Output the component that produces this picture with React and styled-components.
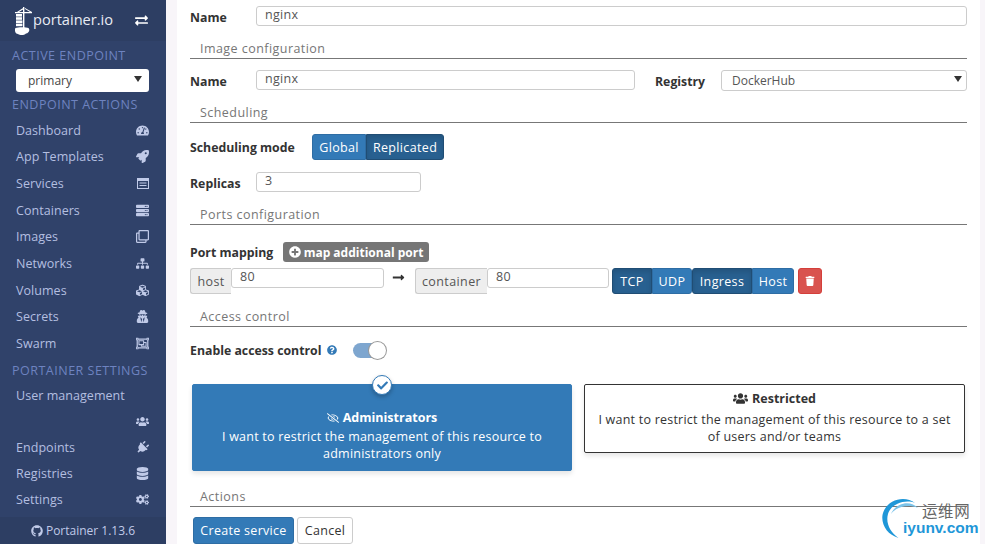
import React from 'react';
import styled, { createGlobalStyle } from 'styled-components';
import {
  FaTachometerAlt, FaRocket, FaServer, FaRegClone, FaSitemap, FaCubes, FaUserSecret,
  FaRegObjectGroup, FaUsers, FaPlug, FaDatabase, FaCogs, FaGithub, FaExchangeAlt, FaPlusCircle,
  FaLongArrowAltRight, FaQuestionCircle, FaTrash, FaRegEyeSlash, FaCheck,
} from 'react-icons/fa';

const Global = createGlobalStyle`
  html, body { margin: 0; height: 544px; overflow: hidden; background: #f8f5f9; }
  body { font-family: "Open Sans", "Noto Sans", sans-serif; font-size: 13px; color: #333; }
  * { box-sizing: border-box; }
`;

const Page = styled.div`
  display: flex;
  width: 985px;
  height: 544px;
  overflow: hidden;
  position: relative;
`;

const Sidebar = styled.aside`
  width: 166px;
  flex: none;
  height: 544px;
  background: #30426a;
  display: flex;
  flex-direction: column;
  color: #b4bfe0;
`;

const Brand = styled.div`
  height: 41px;
  background: #2d3e63;
  display: flex;
  align-items: center;
  padding: 0 0 0 15px;
  color: #fff;
`;

const BrandName = styled.span`
  font-size: 14.6px;
  margin-left: 1px;
  color: #e8ebf3;
  width: 80px;
  line-height: 20px;
  margin-top: -4px;
  white-space: nowrap;
`;

const Swap = styled(FaExchangeAlt)`
  font-size: 13px;
  margin-left: 22px;
  color: #fff;
`;

const SideTitle = styled.div`
  color: #6e83c0;
  font-size: 12.5px;
  letter-spacing: 0.5px;
  padding-left: 12px;
  height: 20px;
  line-height: 20px;
  white-space: nowrap;
  margin-top: ${(p) => p.$top || 0}px;
  margin-bottom: ${(p) => p.$bottom || 0}px;
`;

const EndpointSelect = styled.div`
  width: 133px;
  height: 23px;
  margin: 3px 0 3px 16px;
  background: #fff;
  border-radius: 3px;
  color: #444;
  font-size: 12px;
  display: flex;
  align-items: center;
  justify-content: space-between;
  padding: 0 7px 0 12px;
`;

const Caret = styled.span`
  width: 0;
  height: 0;
  border-left: 4px solid transparent;
  border-right: 4px solid transparent;
  border-top: 6px solid #333;
  margin-top: -3px;
`;

const NavList = styled.nav`
  display: flex;
  flex-direction: column;
`;

const NavRow = styled.div`
  height: ${(p) => p.$h || 26.67}px;
  display: flex;
  align-items: center;
  justify-content: ${(p) => (p.$iconOnly ? 'flex-end' : 'space-between')};
  padding: 0 17px 0 16px;
  font-size: 12.5px;
  letter-spacing: 0.05px;
  color: #b4bfe0;
  white-space: nowrap;
  & svg { font-size: 13px; color: #c0cae8; }
`;

const TiltedPlug = styled(FaPlug)`
  transform: rotate(45deg);
`;

const Footer = styled.div`
  margin-top: auto;
  height: 27px;
  background: #2d3e63;
  display: flex;
  align-items: center;
  justify-content: center;
  gap: 3px;
  font-size: 12px;
  color: #c0cae8;
`;

const Main = styled.main`
  width: 803px;
  margin-left: 11px;
  height: 544px;
  background: #fff;
  padding: 0 13px;
  flex: none;
`;

const Row = styled.div`
  display: flex;
  align-items: ${(p) => p.$align || 'center'};
  height: ${(p) => p.$h}px;
  margin-top: ${(p) => p.$top || 0}px;
`;

const Label = styled.label`
  font-weight: 700;
  font-size: 12.3px;
  color: #333;
  width: ${(p) => p.$w || 66}px;
  margin-left: ${(p) => p.$left || 0}px;
  padding-top: ${(p) => (p.$low ? 3 : 0)}px;
  flex: none;
  white-space: nowrap;
`;

const Input = styled.input`
  height: 20px;
  width: ${(p) => p.$w}px;
  flex: ${(p) => (p.$w ? 'none' : 1)};
  min-width: 0;
  border: 1px solid #ccc;
  border-radius: 3px;
  padding: 0 8px 3px;
  font: inherit;
  font-size: 12.5px;
  letter-spacing: 0.3px;
  color: #555;
  background: #fff;
  outline: none;
`;

const SectionTitle = styled.div`
  height: 19px;
  margin-top: ${(p) => p.$top || 0}px;
  border-bottom: 1px solid #777;
  color: #767676;
  font-size: 12.5px;
  letter-spacing: 0.45px;
  padding-left: 10px;
  line-height: 17px;
`;

const SelectBox = styled.div`
  flex: 1;
  height: 21px;
  border: 1px solid #ccc;
  border-radius: 3px;
  display: flex;
  align-items: center;
  justify-content: space-between;
  padding: 0 4px 0 10px;
  font-size: 12px;
  color: #555;
`;

const Group = styled.div`
  display: flex;
  height: 26px;
  flex: none;
  margin-left: ${(p) => p.$left || 0}px;
`;

const Toggle = styled.button`
  height: 26px;
  width: ${(p) => p.$w}px;
  padding: 0;
  border: 1px solid ${(p) => (p.$on ? '#204d74' : '#2e6da4')};
  background: ${(p) => (p.$on ? '#286090' : '#337ab7')};
  box-shadow: ${(p) => (p.$on ? 'inset 0 3px 5px rgba(0,0,0,.125)' : 'none')};
  color: #fff;
  font: inherit;
  font-size: 12.5px;
  letter-spacing: 0.35px;
  &:first-child { border-radius: 3px 0 0 3px; }
  &:last-child { border-radius: 0 3px 3px 0; }
`;

const MapButton = styled.button`
  width: 146px;
  height: 20px;
  margin-left: -1px;
  border: 0;
  border-radius: 3px;
  background: #767676;
  color: #fff;
  font: inherit;
  font-size: 12px;
  font-weight: 700;
  display: flex;
  align-items: center;
  justify-content: center;
  gap: 3px;
  padding: 0;
  white-space: nowrap;
`;

const Addon = styled.span`
  height: 26px;
  width: ${(p) => p.$w}px;
  flex: none;
  background: #eee;
  border: 1px solid #ccc;
  border-right: 0;
  border-radius: 3px 0 0 3px;
  display: flex;
  align-items: center;
  justify-content: center;
  font-size: 12.5px;
  letter-spacing: 0.4px;
  color: #555;
`;

const Arrow = styled.span`
  width: 31px;
  flex: none;
  display: flex;
  justify-content: center;
  color: #333;
  font-size: 13px;
  padding-top: 3px;
  padding-right: 2px;
`;

const TrashButton = styled.button`
  width: 24px;
  height: 26px;
  margin-left: 4px;
  border: 1px solid #d43f3a;
  border-radius: 3px;
  background: #d9534f;
  color: #fff;
  font-size: 10px;
  display: flex;
  align-items: center;
  justify-content: center;
  padding: 0;
`;

const HelpIcon = styled(FaQuestionCircle)`
  color: #337ab7;
  font-size: 10px;
  margin-left: 5px;
`;

const Switch = styled.span`
  position: relative;
  display: block;
  width: 33px;
  height: 15px;
  margin-left: 16px;
  border-radius: 8px;
  background: #7ea6cf;
`;

const Knob = styled.span`
  position: absolute;
  right: 0;
  top: -1px;
  width: 17px;
  height: 17px;
  border-radius: 50%;
  background: #fff;
  box-shadow: 0 0 0 1px #999;
`;

const Cards = styled.div`
  display: flex;
  align-items: flex-start;
  gap: 12px;
  margin-top: 25px;
  padding-left: 2px;
`;

const Card = styled.div`
  position: relative;
  width: ${(p) => p.$w}px;
  height: ${(p) => p.$h}px;
  padding: ${(p) => p.$pad};
  border-radius: 2px;
  border: 1px solid ${(p) => (p.$active ? '#337ab7' : '#333')};
  background: ${(p) => (p.$active ? '#337ab7' : '#fff')};
  color: ${(p) => (p.$active ? '#fff' : '#333')};
  box-shadow: 0 3px 5px rgba(0, 0, 0, 0.1);
  text-align: center;
  font-size: 12.5px;
  letter-spacing: 0.23px;
  line-height: 17px;
`;

const CardTitle = styled.div`
  font-weight: 700;
  letter-spacing: 0;
  margin-bottom: ${(p) => p.$gap}px;
  display: flex;
  align-items: center;
  justify-content: center;
  gap: 4px;
  & svg { font-size: ${(p) => p.$icon || 12}px; }
`;

const CheckMark = styled.span`
  position: absolute;
  left: 179px;
  top: -10px;
  width: 20px;
  height: 20px;
  border-radius: 50%;
  background: #fff;
  color: #337ab7;
  font-size: 11px;
  border: 1px solid #337ab7;
  box-shadow: 0 2px 4px rgba(0, 0, 0, 0.25);
  display: flex;
  align-items: center;
  justify-content: center;
`;

const Actions = styled.div`
  display: flex;
  gap: 3px;
  margin-top: 10px;
  padding-left: 3px;
`;

const PrimaryButton = styled.button`
  width: 101px;
  height: 27px;
  border: 1px solid #2e6da4;
  border-radius: 3px;
  background: #337ab7;
  color: #fff;
  font: inherit;
  font-size: 12.5px;
  letter-spacing: 0.3px;
  padding: 0;
`;

const PlainButton = styled(PrimaryButton)`
  width: 56px;
  border-color: #ccc;
  background: #fff;
  color: #333;
`;

const Watermark = styled.div`
  position: absolute;
  left: 881px;
  top: 496px;
  width: 104px;
  height: 46px;
`;

const WaterCn = styled.span`
  position: absolute;
  left: 41px;
  top: 3px;
  font-family: "Noto Sans CJK SC", sans-serif;
  font-size: 15.5px;
  line-height: 22px;
  color: #666;
  letter-spacing: 0.6px;
`;

const WaterEn = styled.span`
  position: absolute;
  left: 22px;
  top: 23px;
  font-family: "Liberation Sans", sans-serif;
  font-weight: 700;
  font-size: 15.5px;
  line-height: 18px;
  color: #1f97d8;
`;

const Logo = () => (
  <svg width="17" height="29" viewBox="0 0 17 29" fill="#fff" style={{ marginTop: 1 }}>
    <path d="M0 5h17v1.2H0zM8 0h1.400v22H8zM10 1l7 4h-2l-5-3zM2 5l6-4v1.400L4 5z" />
    <rect x="1" y="7" width="6" height="2.6" />
    <rect x="1" y="10.2" width="6" height="2.6" />
    <rect x="1" y="13.4" width="6.4" height="2.6" />
    <rect x="1" y="16.6" width="6.4" height="2.6" />
    <path d="M0.500 21c2-1 11-1 13 0 2 2 0 5-2.500 5.500-2 2-6 2-8 .5C0.500 27 -1 23 0.500 21z" />
  </svg>
);

const ListAlt = () => (
  <svg width="12" height="11" viewBox="0 0 12 11" fill="currentColor">
    <path d="M0 0h12v11H0zM1 3v7h10V3zM2.500 4.500h7v1h-7zM2.500 7h7v1h-7z" fillRule="evenodd" />
  </svg>
);

const endpointNav = [
  ['Dashboard', FaTachometerAlt],
  ['App Templates', FaRocket],
  ['Services', ListAlt],
  ['Containers', FaServer],
  ['Images', FaRegClone],
  ['Networks', FaSitemap],
  ['Volumes', FaCubes],
  ['Secrets', FaUserSecret],
  ['Swarm', FaRegObjectGroup],
];

const settingsNav = [
  ['Endpoints', TiltedPlug],
  ['Registries', FaDatabase],
  ['Settings', FaCogs],
];

const Nav = ({ items, h }) => (
  <NavList>
    {items.map(([name, Icon]) => (
      <NavRow key={name} $h={h}>
        {name}
        <Icon />
      </NavRow>
    ))}
  </NavList>
);

export default function App() {
  return (
    <Page>
      <Global />
      <Sidebar>
        <Brand>
          <Logo />
          <BrandName>portainer.io</BrandName>
          <Swap />
        </Brand>
        <SideTitle $top={5}>ACTIVE ENDPOINT</SideTitle>
        <EndpointSelect>
          primary
          <Caret />
        </EndpointSelect>
        <SideTitle $bottom={2}>ENDPOINT ACTIONS</SideTitle>
        <Nav items={endpointNav} />
        <SideTitle $top={4} $bottom={2}>PORTAINER SETTINGS</SideTitle>
        <NavRow $h={26}>User management</NavRow>
        <NavRow $h={26} $iconOnly>
          <FaUsers />
        </NavRow>
        <Nav items={settingsNav} h={26} />
        <Footer>
          <FaGithub />
          Portainer 1.13.6
        </Footer>
      </Sidebar>

      <Main>
        <Row $h={20} $top={6}>
          <Label $low>Name</Label>
          <Input readOnly value="nginx" />
        </Row>
        <SectionTitle $top={14}>Image configuration</SectionTitle>
        <Row $h={20} $top={11}>
          <Label $low>Name</Label>
          <Input $w={379} readOnly value="nginx" />
          <Label $w={66} $left={20} $low>Registry</Label>
          <SelectBox>
            DockerHub
            <Caret />
          </SelectBox>
        </Row>
        <SectionTitle $top={14}>Scheduling</SectionTitle>
        <Row $h={26} $top={11}>
          <Label $w={122}>Scheduling mode</Label>
          <Group>
            <Toggle $w={54}>Global</Toggle>
            <Toggle $w={78} $on>Replicated</Toggle>
          </Group>
        </Row>
        <Row $h={20} $top={12}>
          <Label $low>Replicas</Label>
          <Input $w={165} readOnly value="3" />
        </Row>
        <SectionTitle $top={14}>Ports configuration</SectionTitle>
        <Row $h={20} $top={17}>
          <Label $w={94}>Port mapping</Label>
          <MapButton>
            <FaPlusCircle />
            map additional port
          </MapButton>
        </Row>
        <Row $h={26} $top={6} $align="flex-start">
          <Addon $w={41}>host</Addon>
          <Input $w={153} readOnly value="80" />
          <Arrow><FaLongArrowAltRight /></Arrow>
          <Addon $w={72}>container</Addon>
          <Input $w={122} readOnly value="80" />
          <Group $left={3}>
            <Toggle $w={40} $on>TCP</Toggle>
            <Toggle $w={40}>UDP</Toggle>
          </Group>
          <Group>
            <Toggle $w={60} $on>Ingress</Toggle>
            <Toggle $w={42}>Host</Toggle>
          </Group>
          <TrashButton><FaTrash /></TrashButton>
        </Row>
        <SectionTitle $top={14}>Access control</SectionTitle>
        <Row $h={18} $top={14}>
          <Label $w={132}>Enable access control</Label>
          <HelpIcon />
          <Switch><Knob /></Switch>
        </Row>
        <Cards>
          <Card $w={380} $h={87} $pad="24px 20px 0" $active>
            <CheckMark><FaCheck /></CheckMark>
            <CardTitle $gap={2}><FaRegEyeSlash />Administrators</CardTitle>
            I want to restrict the management of this resource to administrators only
          </Card>
          <Card $w={381} $h={69} $pad="5px 10px 0">
            <CardTitle $gap={4} $icon={15}><FaUsers />Restricted</CardTitle>
            I want to restrict the management of this resource to a set of users and/or teams
          </Card>
        </Cards>
        <SectionTitle $top={17}>Actions</SectionTitle>
        <Actions>
          <PrimaryButton>Create service</PrimaryButton>
          <PlainButton>Cancel</PlainButton>
        </Actions>
      </Main>

      <Watermark>
        <svg width="40" height="44" viewBox="0 0 40 44" fill="none">
          <path d="M34 7C24 -1 5 3 1.500 19c-1.500 10 5 20 16 23C9 36 4.500 27 7 18 10 8 24 3 34 7z" fill="#1f97d8" />
          <path d="M37 12C30 4 15 6 10 18c6-8 18-10 27-6z" fill="#7cc4ea" />
        </svg>
        <WaterCn>运维网</WaterCn>
        <WaterEn>iyunv.com</WaterEn>
      </Watermark>
    </Page>
  );
}
